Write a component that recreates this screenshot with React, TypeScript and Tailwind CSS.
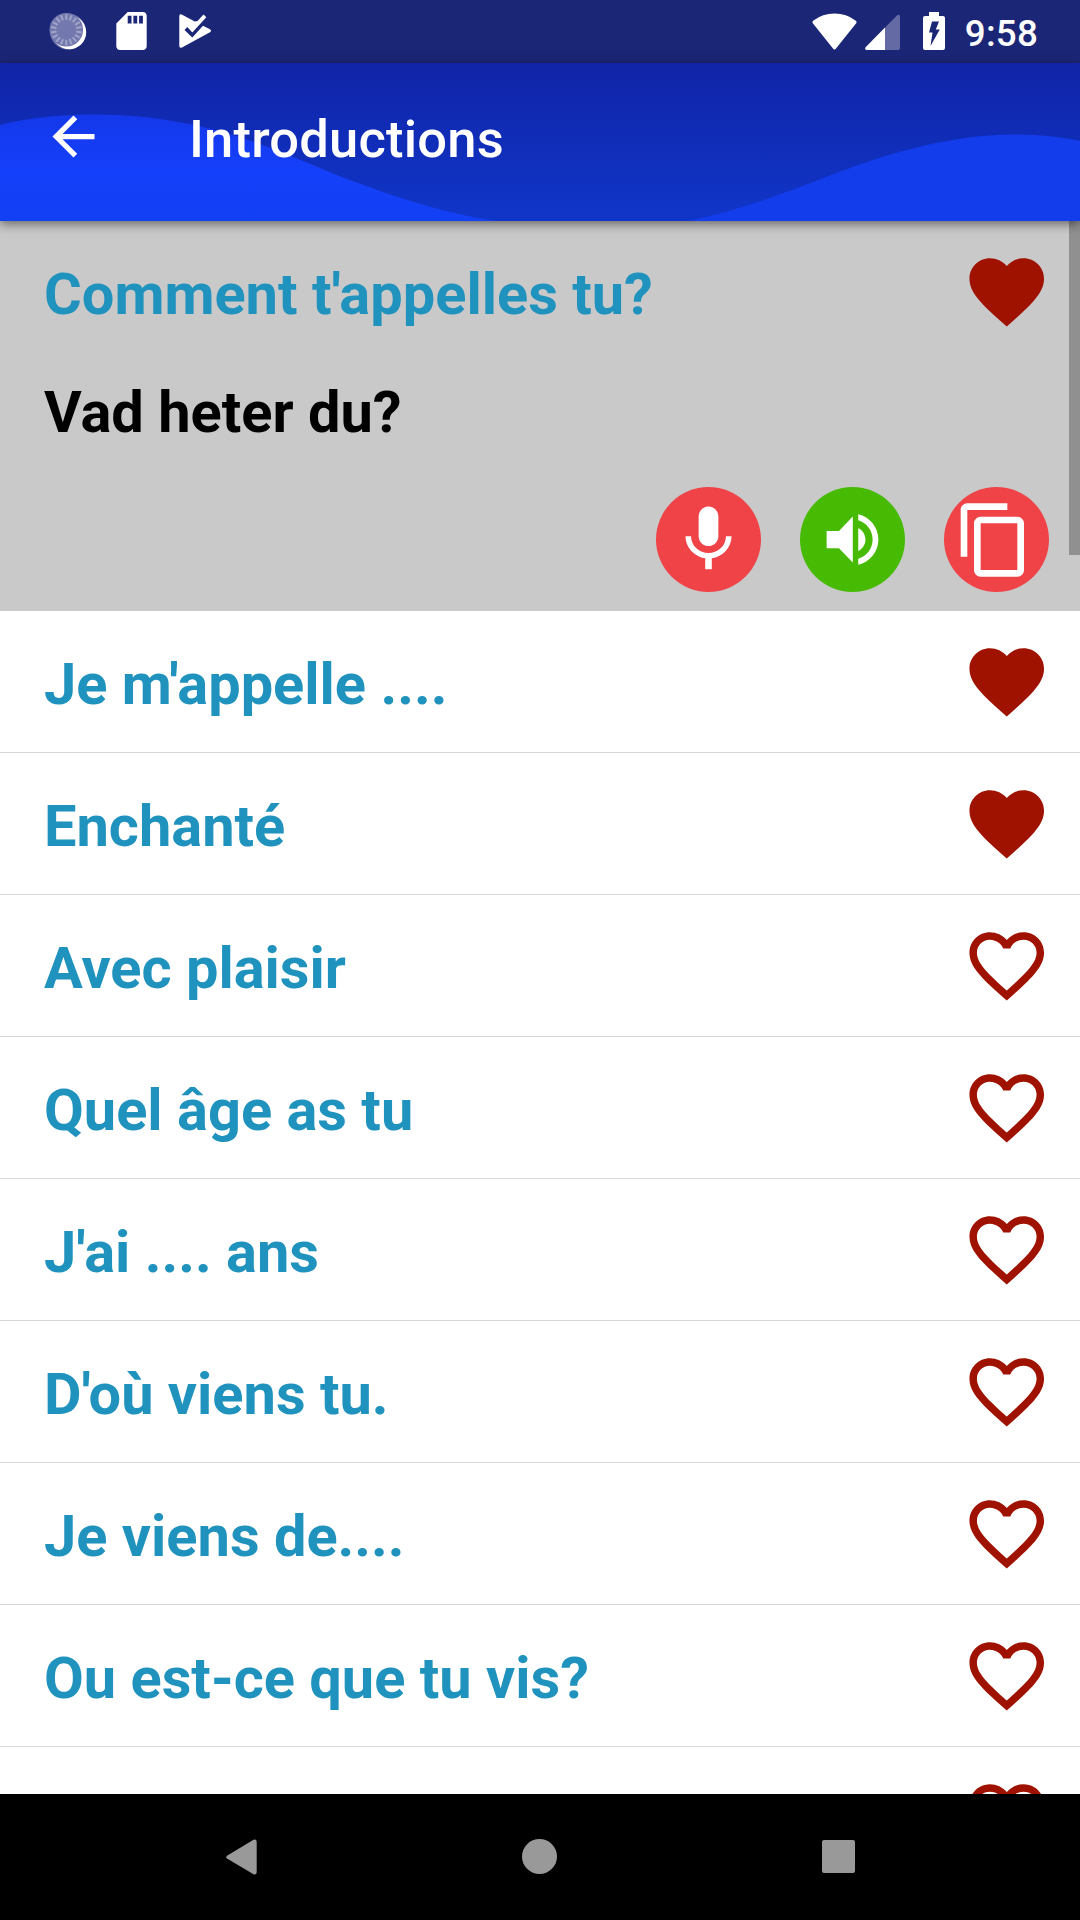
type Phrase = {
  id: number;
  text: string;
  favorite: boolean;
};

const phrases: Phrase[] = [
  { id: 2, text: "Je m'appelle ....", favorite: true },
  { id: 3, text: "Enchanté", favorite: true },
  { id: 4, text: "Avec plaisir", favorite: false },
  { id: 5, text: "Quel âge as tu", favorite: false },
  { id: 6, text: "J'ai .... ans", favorite: false },
  { id: 7, text: "D'où viens tu.", favorite: false },
  { id: 8, text: "Je viens de....", favorite: false },
  { id: 9, text: "Ou est-ce que tu vis?", favorite: false },
];

const SPINNER_TICKS = Array.from({ length: 18 }, (_, i) => i * 20);

function Heart({ filled }: { filled: boolean }) {
  return (
    <svg viewBox="0 0 24 24" className="size-[89.5px] shrink-0 fill-[#a01200]">
      {filled ? (
        <path d="M12 21.35l-1.45-1.32C5.4 15.36 2 12.28 2 8.5 2 5.42 4.42 3 7.5 3c1.74 0 3.41.81 4.5 2.09C13.09 3.81 14.76 3 16.5 3 19.58 3 22 5.42 22 8.5c0 3.78-3.4 6.86-8.55 11.54L12 21.35z" />
      ) : (
        <path d="M16.5 3c-1.74 0-3.41.81-4.5 2.09C10.91 3.81 9.24 3 7.5 3 4.42 3 2 5.42 2 8.5c0 3.78 3.4 6.86 8.55 11.54L12 21.35l1.45-1.32C18.6 15.36 22 12.28 22 8.5 22 5.42 19.58 3 16.5 3zm-4.4 15.55l-.1.1-.1-.1C7.14 14.24 4 11.39 4 8.5 4 6.5 5.5 5 7.5 5c1.54 0 3.04.99 3.57 2.36h1.87C13.46 5.99 14.96 5 16.5 5c2 0 3.5 1.5 3.5 3.5 0 2.89-3.14 5.74-7.9 10.05z" />
      )}
    </svg>
  );
}

function StatusBar() {
  return (
    <div className="flex h-[63px] items-start justify-between bg-[#1c2677] pr-[42px] pl-[49px]">
      <div className="flex pt-[12px]">
        <svg viewBox="0 0 38 38" className="size-[38px]">
          <circle cx="19" cy="19.5" r="18" fill="#5f66a0" />
          <circle cx="20.2" cy="20.2" r="17" fill="#ffffff" />
          <circle cx="17.3" cy="17.8" r="16.8" fill="#7379ae" />
          {SPINNER_TICKS.map((angle) => (
            <path
              key={angle}
              d="M17.3 2.300v5.500"
              stroke="#a0a4c6"
              strokeWidth="2"
              transform={`rotate(${angle} 17.3 17.8)`}
            />
          ))}
        </svg>
        <svg viewBox="4 2 16 20" className="ml-[29px] h-[38px] w-[31px] fill-white">
          <path d="M18 2h-8L4.02 8 4 20c0 1.1.9 2 2 2h12c1.1 0 2-.9 2-2V4c0-1.1-.9-2-2-2zm-6 6h-2V4h2v4zm3 0h-2V4h2v4zm3 0h-2V4h2v4z" />
        </svg>
        <svg viewBox="0 0 33 36" className="ml-[32px] h-[36px] w-[33px] fill-white">
          <path d="M.3 4.200Q.3 1.500 2.700 2.500L15.800 9.500 18.500 9 24.500 2.500 27.300 5.200 13.300 20.500 8.300 15 5.500 18 13.300 25.500 24 13.700 31 17.300Q33 18.500 31 20.300L3 35.500Q.3 36.500.3 34z" />
        </svg>
      </div>
      <div className="flex">
        <svg viewBox="0 0 45 37" className="mt-[12.5px] h-[37px] w-[45px] fill-white">
          <path d="M1 10.500Q-.3 8.900 1.500 7.600 10.500.6 22.500.6 34.500.6 43.500 7.600 45.300 8.900 44 10.500L24 35.500Q22.500 37.500 21 35.500z" />
        </svg>
        <svg viewBox="0 0 35 36" className="mt-[14px] ml-[7.5px] h-[36px] w-[35px]">
          <path d="M20 36V13.500L32.500 1Q35 0 35 2.500V34Q35 36 33 36z" fill="#646aa3" />
          <path d="M20 13.500V36H1.500Q-.8 35.500.6 33.300z" fill="#ffffff" />
        </svg>
        <svg viewBox="0 0 22 38" className="mt-[12px] ml-[23px] h-[38px] w-[22px] fill-white">
          <path
            fillRule="evenodd"
            d="M6 0H16V4H20Q22 4 22 6V36Q22 38 20 38H2Q0 38 0 36V6Q0 4 2 4H6zM9 9.500 6 20.500H9.500L7.500 34 16.800 17.500H12.800L16 9.500z"
          />
        </svg>
        <span className="mt-[12px] ml-[20px] text-[36.75px] leading-[43px] font-medium tracking-[0.2px] text-white">
          9:58
        </span>
      </div>
    </div>
  );
}

function Header() {
  return (
    <header className="relative z-10 h-[158px] bg-linear-to-b from-[#1024a7] to-[#1036c9] shadow-[0_3px_10px_rgba(0,0,0,0.5)]">
      {/* decorative waves behind the title */}
      <svg viewBox="0 63 1080 158" className="absolute inset-0 h-full w-full">
        <defs>
          <linearGradient id="wave" x1="0" y1="0" x2="0" y2="1">
            <stop offset="0" stopColor="#1438ea" />
            <stop offset="0.55" stopColor="#1540fb" />
            <stop offset="1" stopColor="#1240f3" />
          </linearGradient>
        </defs>
        <path d="M0 125C30 117 65 114.500 95 114.500C175 114.500 240 134 303 161C350 181 420 209 495 221H0z" fill="url(#wave)" />
        <path d="M688 221C740 210 785 193 826 177C880 156 945 134.500 1015 134.500C1040 134.500 1060 137 1080 141V221z" fill="#133cea" />
      </svg>
      <div className="relative flex h-full items-center pb-[11px] pl-[42px]">
        <svg viewBox="0 0 24 24" className="size-[63px] fill-white">
          <path d="M20 11H7.830l5.590-5.590L12 4l-8 8 8 8 1.410-1.410L7.830 13H20v-2z" />
        </svg>
        <h1 className="ml-[84px] pt-[5px] text-[52.5px] leading-[62px] font-medium tracking-[0.2px] text-white">
          Introductions
        </h1>
      </div>
    </header>
  );
}

function ActionButtons() {
  return (
    <div className="flex justify-end gap-[39px] pr-[31px]">
      <button className="flex size-[105px] items-center justify-center rounded-full bg-[#ef4347]">
        <svg viewBox="0 0 24 24" className="size-[79px] fill-white">
          <path d="M12 14c1.660 0 2.990-1.340 2.990-3L15 5c0-1.660-1.340-3-3-3S9 3.340 9 5v6c0 1.660 1.340 3 3 3zm5.300-3c0 3-2.540 5.100-5.300 5.100S6.700 14 6.700 11H5c0 3.410 2.720 6.230 6 6.720V21h2v-3.280c3.280-.48 6-3.300 6-6.720h-1.700z" />
        </svg>
      </button>
      <button className="flex size-[105px] items-center justify-center rounded-full bg-[#47bb04]">
        <svg viewBox="0 0 24 24" className="size-[69px] fill-white">
          <path d="M3 9v6h4.300l4.800 5V4L7.300 9H3zm13.500 3c0-1.770-1.020-3.290-2.500-4.030v8.050c1.480-.73 2.500-2.250 2.500-4.020zM14 3.230v2.060c2.890.86 5 3.540 5 6.710s-2.110 5.850-5 6.710v2.060c4.010-.91 7-4.490 7-8.770s-2.990-7.860-7-8.770z" />
        </svg>
      </button>
      <button className="flex size-[105px] items-center justify-center rounded-full bg-[#ef4347] pr-[5px]">
        <svg viewBox="0 0 24 24" className="size-[80px] fill-white">
          <path d="M16 1H4c-1.100 0-2 .9-2 2v14h2V3h12V1zm3 4H8c-1.100 0-2 .9-2 2v14c0 1.100.9 2 2 2h11c1.100 0 2-.9 2-2V7c0-1.100-.9-2-2-2zm0 16H8V7h11v14z" />
        </svg>
      </button>
    </div>
  );
}

function PhraseRow({ phrase }: { phrase: Phrase }) {
  return (
    <li className="flex h-[142px] items-center justify-between border-b border-[#d8d8d8] pr-[29px] pl-[44px]">
      <span className="pt-[4px] text-[57.75px] leading-[68px] font-bold text-[#2092be]">
        {phrase.text}
      </span>
      <Heart filled={phrase.favorite} />
    </li>
  );
}

function NavigationBar() {
  return (
    <nav className="flex h-[126px] shrink-0 items-center justify-center bg-black pr-px pb-px">
      <div className="flex w-[298.5px] justify-center">
        <svg viewBox="0 0 31 36" className="h-[36px] w-[31px] fill-[#999999]">
          <path d="M1 16.700 27.500.8Q30.700-.3 30.700 3V33Q30.700 36.300 27.500 35.200L1 19.600Q-.7 18.200 1 16.700z" />
        </svg>
      </div>
      <div className="flex w-[298.5px] justify-center">
        <div className="size-[35px] rounded-full bg-[#999999]" />
      </div>
      <div className="flex w-[298.5px] justify-center">
        <div className="size-[33px] rounded-[2px] bg-[#999999]" />
      </div>
    </nav>
  );
}

export default function App() {
  return (
    <div className="flex h-[1920px] w-[1080px] flex-col overflow-hidden bg-white font-['Roboto',sans-serif]">
      <StatusBar />
      <Header />
      <main className="relative min-h-0 flex-1 overflow-hidden">
        <section className="h-[390px] bg-[#c9c9c9] pl-[44px]">
          <div className="flex h-[141px] items-center justify-between pr-[29px]">
            <h2 className="pt-[4px] text-[57.75px] leading-[68px] font-bold text-[#2092be]">
              Comment t'appelles tu?
            </h2>
            <Heart filled />
          </div>
          <p className="mt-[16px] mb-[41px] text-[57.75px] leading-[68px] font-bold text-black">
            Vad heter du?
          </p>
          <ActionButtons />
        </section>
        <ul>
          {phrases.map((phrase) => (
            <PhraseRow key={phrase.id} phrase={phrase} />
          ))}
          <li className="flex h-[142px] items-center justify-end pr-[29px]">
            <Heart filled={false} />
          </li>
        </ul>
        {/* scrollbar thumb */}
        <div className="absolute top-0 right-0 h-[334px] w-[11px] bg-[#909090]" />
      </main>
      <NavigationBar />
    </div>
  );
}
